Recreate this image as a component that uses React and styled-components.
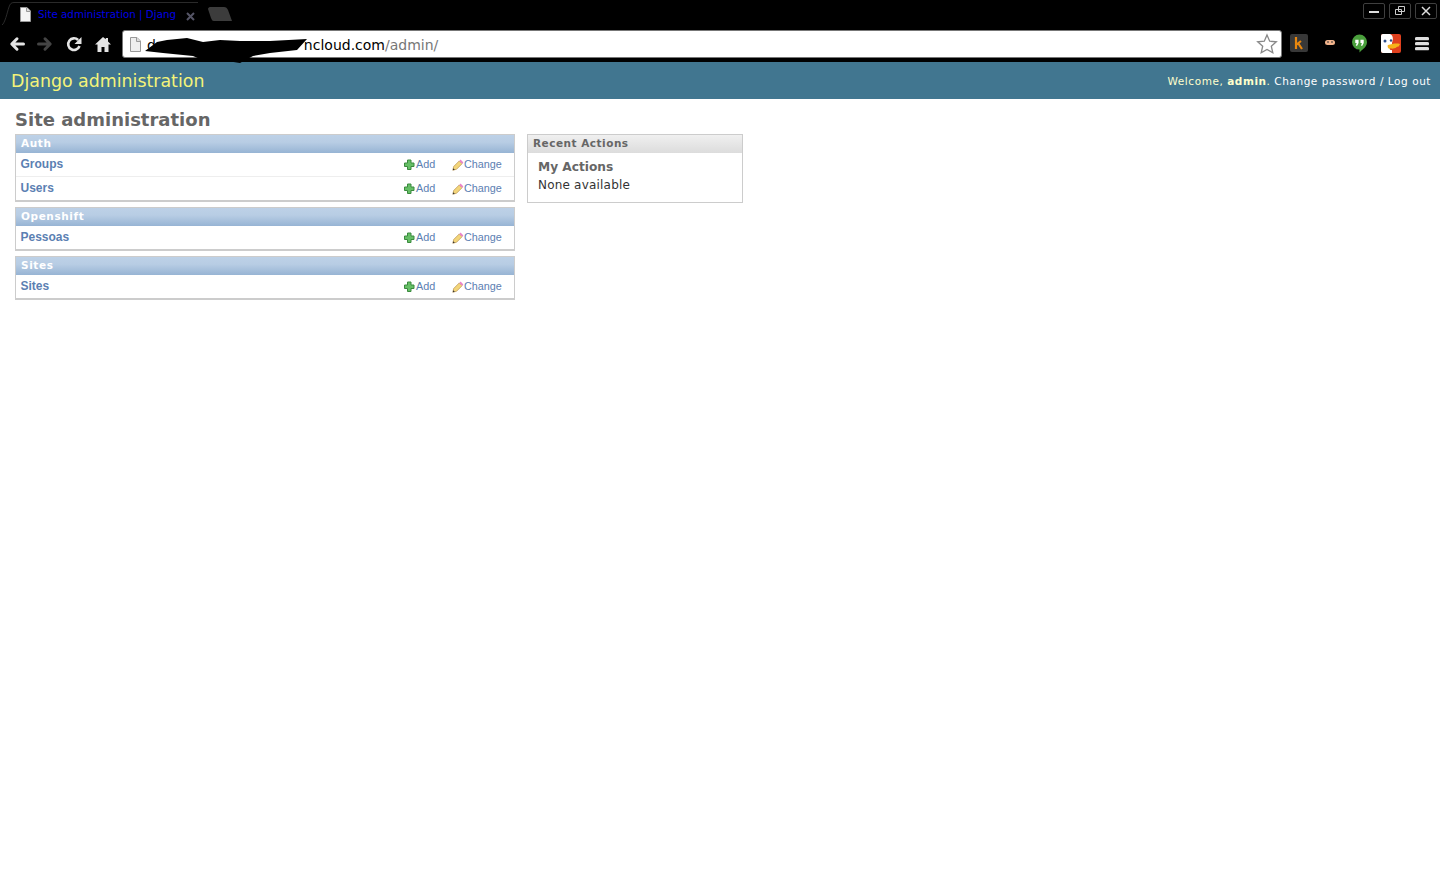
import styled, { createGlobalStyle } from "styled-components";

const GlobalStyle = createGlobalStyle`
  html, body {
    margin: 0;
    padding: 0;
    background: #fff;
    font-family: "DejaVu Sans", sans-serif;
  }
`;

const Page = styled.div`
  width: 1440px;
  height: 873px;
  overflow: hidden;
  background: #fff;
`;

// browser chrome
const BrowserChrome = styled.div`
  position: relative;
  z-index: 1;
  height: 62px;
  background: #000;
`;

const TabStrip = styled.div`
  height: 29px;
  display: flex;
  align-items: flex-start;
  justify-content: space-between;
`;

const Tabs = styled.div`
  display: flex;
  align-items: flex-start;
  padding-left: 2px;
`;

const Tab = styled.div`
  position: relative;
  width: 196px;
  height: 25px;
  margin-top: 2px;
  display: flex;
  align-items: center;
  padding-left: 18px;
  box-sizing: border-box;
`;

const TabTitle = styled.span`
  margin-left: 7px;
  margin-bottom: 2px;
  width: 142px;
  white-space: nowrap;
  color: #0000e6;
  font-size: 10.3px;
  line-height: 14px;
`;

const TabClose = styled.span`
  margin-left: 6px;
  margin-top: 3px;
  display: flex;
`;

const TabEdge = styled.svg`
  position: absolute;
  left: 0;
  top: 0;
`;

const NewTab = styled.svg`
  margin-top: 7px;
  margin-left: 10px;
`;

const WindowButtons = styled.div`
  display: flex;
  gap: 4px;
  padding: 3px 3px 0 0;
`;

const WindowButton = styled.div`
  width: 20px;
  height: 14px;
  border: 1px solid #3f3f3f;
  border-radius: 2px;
  display: flex;
  align-items: center;
  justify-content: center;
`;

const Toolbar = styled.div`
  height: 33px;
  display: flex;
  align-items: flex-start;
  padding-left: 8px;
`;

const NavIcon = styled.svg`
  flex: none;
  margin-right: ${(p) => p.$gap}px;
  margin-top: 6px;
`;

const Omnibox = styled.div`
  position: relative;
  width: 1160px;
  height: 28px;
  margin-top: 1px;
  margin-left: 1px;
  margin-right: 8px;
  flex: none;
  box-sizing: border-box;
  background: #fff;
  border: 1px solid #777;
  border-radius: 3px;
  display: flex;
  align-items: center;
  padding: 1px 0 0 7px;
  font-size: 14px;
`;

const UrlHost = styled.span`
  display: flex;
  justify-content: space-between;
  color: #000;
  margin-left: 6px;
  white-space: nowrap;
  width: 238px;
`;

const UrlPath = styled.span`
  color: #777;
`;

const Scribble = styled.svg`
  position: absolute;
  left: 22px;
  top: 7px;
`;

const StarIcon = styled.svg`
  position: absolute;
  right: 3px;
  top: 2px;
`;

const Extensions = styled.div`
  display: flex;
  align-items: flex-start;
`;

const ExtIcon = styled.svg`
  flex: none;
  margin-top: ${(p) => p.$top || 5}px;
  margin-right: ${(p) => p.$gap || 0}px;
`;

// django header
const Header = styled.header`
  height: 37px;
  box-sizing: border-box;
  background: #417690;
  display: flex;
  align-items: center;
  justify-content: space-between;
  padding: 0 9px 0 11px;
`;

const Branding = styled.h1`
  margin: 0;
  font-size: 17.4px;
  font-weight: 400;
  color: #f4f379;
  line-height: 22px;
`;

const UserTools = styled.div`
  margin-top: 1px;
  font-size: 10.5px;
  letter-spacing: 0.55px;
  color: #ffc;
  line-height: 14px;

  strong {
    font-weight: 700;
  }

  span {
    color: #fff;
  }
`;

const Content = styled.main`
  padding: 9px 15px 0;
`;

const Title = styled.h2`
  margin: 0 0 3px;
  font-size: 18px;
  line-height: 23px;
  font-weight: 700;
  color: #666;
`;

const Columns = styled.div`
  display: flex;
  align-items: flex-start;
  gap: 12px;
`;

const AppList = styled.div`
  width: 500px;
  display: flex;
  flex-direction: column;
  gap: 5px;
`;

const Module = styled.section`
  box-sizing: border-box;
  border: 1px solid #ccc;
  border-bottom-width: 2px;
`;

const Caption = styled.div`
  height: 18px;
  box-sizing: border-box;
  padding-left: 5px;
  background: linear-gradient(#bdd1e7 0%, #b8cde4 40%, #97b4d4 100%);
  color: #fff;
  font-size: 10.5px;
  font-weight: 700;
  letter-spacing: 0.6px;
  line-height: 17px;
`;

const Row = styled.div`
  height: ${(p) => (p.$first ? 23 : 24)}px;
  box-sizing: border-box;
  display: flex;
  align-items: flex-start;
  padding-left: 4.5px;
  border-top: ${(p) => (p.$first ? "none" : "1px solid #eee")};
`;

const ModelName = styled.a`
  flex: 1;
  margin-top: 4px;
  font-family: "Liberation Sans", Arial, sans-serif;
  font-size: 12px;
  font-weight: 700;
  line-height: 15px;
  color: #5b80b2;
`;

const ActionLink = styled.a`
  display: flex;
  align-items: center;
  margin-top: 4px;
  width: ${(p) => p.$w}px;
  font-family: "Liberation Sans", Arial, sans-serif;
  font-size: 10.8px;
  line-height: 14px;
  color: #5b80b2;
`;

const ActionIcon = styled.svg`
  flex: none;
  margin-top: 2px;
`;

const RecentPanel = styled.aside`
  width: 216px;
  height: 69px;
  box-sizing: border-box;
  border: 1px solid #ccc;
`;

const RecentCaption = styled.div`
  height: 18px;
  box-sizing: border-box;
  padding-left: 5px;
  background: linear-gradient(#f0f0f0, #dcdcdc);
  color: #666;
  font-size: 10.5px;
  font-weight: 700;
  letter-spacing: 0.5px;
  line-height: 17px;
`;

const RecentTitle = styled.h3`
  margin: 6px 0 0 10px;
  color: #666;
  font-size: 12.2px;
  line-height: 16px;
  font-weight: 700;
`;

const RecentBody = styled.p`
  margin: 3px 0 0 10px;
  color: #333;
  font-size: 12px;
  line-height: 15px;
  letter-spacing: 0.2px;
`;

const modules = [
  { name: "Auth", rows: ["Groups", "Users"] },
  { name: "Openshift", rows: ["Pessoas"] },
  { name: "Sites", rows: ["Sites"] },
];

function PageIcon({ fill, line }) {
  return (
    <svg width="11" height="15" viewBox="0 0 11 15" style={{ flex: "none" }}>
      <path d="M.5.5h6.500l3.500 3.500v10.500H.5z" fill={fill} stroke={line} />
      <path d="M6.500.5v4h4" fill="#ddd" stroke={line} />
    </svg>
  );
}

function PlusIcon() {
  return (
    <ActionIcon width="12" height="12" viewBox="0 0 12 12">
      <path d="M3.500 1h3.500v3h3v3.500H7v3H3.500v-3H.5V4h3z" fill="#66bf66" stroke="#3b8a3e" />
    </ActionIcon>
  );
}

function PencilIcon() {
  return (
    <ActionIcon width="12" height="12" viewBox="0 0 12 12">
      <path d="M.8 11.200l.9-3.700 5.600-5.600 2.800 2.800-5.600 5.600z" fill="#f3d57a" stroke="#b8924a" strokeWidth="0.7" />
      <path d="M7.300 1.900l1.300-1.300 2.800 2.800-1.300 1.300z" fill="#ea82c8" />
      <path d="M.8 11.200l.5-2 1.500 1.500z" fill="#333" />
    </ActionIcon>
  );
}

function ModuleRow({ label, first }) {
  return (
    <Row $first={first}>
      <ModelName>{label}</ModelName>
      <ActionLink $w={48}>
        <PlusIcon />
        Add
      </ActionLink>
      <ActionLink $w={62}>
        <PencilIcon />
        Change
      </ActionLink>
    </Row>
  );
}

export default function App() {
  return (
    <Page>
      <GlobalStyle />
      <BrowserChrome>
        <TabStrip>
          <Tabs>
            <Tab>
              <TabEdge width="196" height="25" viewBox="0 0 196 25">
                <path d="M0 23c3-2 5-12 7-18 1-3 2-4.500 5-4.500h184" fill="none" stroke="#2a2a2a" />
              </TabEdge>
              <PageIcon fill="#f5f5f5" line="#999" />
              <TabTitle>Site administration | Djang</TabTitle>
              <TabClose>
                <svg width="9" height="9" viewBox="0 0 9 9">
                  <path d="M1 1l7 7M8 1L1 8" stroke="#556" strokeWidth="2" />
                </svg>
              </TabClose>
            </Tab>
            <NewTab width="25" height="14" viewBox="0 0 25 14">
              <path d="M2 0h14c2 0 3 1 4 3l4 11H6c-2 0-2-1-3-3L0 2c0-1 1-2 2-2z" fill="#3c3c3c" />
            </NewTab>
          </Tabs>
          <WindowButtons>
            <WindowButton>
              <svg width="12" height="10" viewBox="0 0 12 10">
                <path d="M1 6h10" stroke="#ddd" strokeWidth="2" />
              </svg>
            </WindowButton>
            <WindowButton>
              <svg width="12" height="10" viewBox="0 0 12 10">
                <path d="M4.500.5h6v5h-6zM1.500 3.500h6v5h-6z" fill="none" stroke="#ccc" />
              </svg>
            </WindowButton>
            <WindowButton>
              <svg width="12" height="10" viewBox="0 0 12 10">
                <path d="M2 1l8 8M10 1L2 9" stroke="#ddd" strokeWidth="1.500" />
              </svg>
            </WindowButton>
          </WindowButtons>
        </TabStrip>
        <Toolbar>
          <NavIcon $gap={10} width="18" height="18" viewBox="0 0 18 18">
            <path d="M15.500 9H5M9 3.800L3.800 9 9 14.200" fill="none" stroke="#e4e4e4" strokeWidth="3" strokeLinecap="round" strokeLinejoin="round" />
          </NavIcon>
          <NavIcon $gap={11} width="18" height="18" viewBox="0 0 18 18">
            <path d="M2.500 9H13M9 3.800L14.200 9 9 14.200" fill="none" stroke="#444" strokeWidth="3" strokeLinecap="round" strokeLinejoin="round" />
          </NavIcon>
          <NavIcon $gap={12} width="18" height="18" viewBox="0 0 18 18">
            <path d="M14.500 11a5.800 5.800 0 1 1-1.400-6" fill="none" stroke="#e4e4e4" strokeWidth="2.600" />
            <path d="M16.500 2v7H9.500z" fill="#e4e4e4" />
          </NavIcon>
          <NavIcon $gap={10} width="16" height="18" viewBox="0 0 16 18">
            <path d="M8 2L0 9.500h2.500V17h4v-5h3v5h4V9.500H16l-3-3V3h-2.200v1.300z" fill="#e4e4e4" />
          </NavIcon>
          <Omnibox>
            <PageIcon fill="#eee" line="#999" />
            <UrlHost>
              <span>d</span>
              <span>ncloud.com</span>
            </UrlHost>
            <UrlPath>/admin/</UrlPath>
            <Scribble width="166" height="26" viewBox="0 0 166 26">
              <path d="M0 13L12 4L22 2L42 0L58 4L75 2L95 3L125 3L162 1L152 12L125 15L108 18L95 25L82 23L62 24L48 18L18 15Z" fill="#000" />
            </Scribble>
            <StarIcon width="22" height="22" viewBox="0 0 22 22">
              <path d="M11 2l2.700 6.200 6.600.6-5 4.400 1.500 6.600L11 16.400 5.200 19.800l1.500-6.600-5-4.400 6.600-.6z" fill="#fff" stroke="#888" strokeWidth="1.300" />
            </StarIcon>
          </Omnibox>
          <Extensions>
            <ExtIcon $gap={14} width="18" height="18" viewBox="0 0 18 18">
              <rect width="18" height="18" rx="2" fill="#383838" />
              <path d="M6 3v12M6 11l5-4M8 9l4 6" stroke="#e8870e" strokeWidth="2.200" fill="none" />
            </ExtIcon>
            <ExtIcon $gap={14} $top={6} width="16" height="16" viewBox="0 0 16 16">
              <rect x="3" y="5" width="10" height="5" rx="2.500" fill="#f2b48c" />
              <path d="M5 7h2M9 7h2" stroke="#333" strokeWidth="1" />
            </ExtIcon>
            <ExtIcon $gap={14} width="15" height="19" viewBox="0 0 16 19">
              <path d="M8 0a8 8 0 0 1 8 8c0 4-3 7-6 9l-2 2v-3a8 8 0 0 1 0-16z" fill="#4a9f3c" />
              <path d="M3.500 5.500h3.500v3.500l-1.500 3H4l1-3H3.500zM9 5.500h3.500v3.500l-1.500 3H9.500l1-3H9z" fill="#fff" />
            </ExtIcon>
            <ExtIcon $gap={14} width="20" height="19" viewBox="0 0 20 19">
              <rect width="20" height="19" rx="2" fill="#e0401e" />
              <path d="M0 2a2 2 0 0 1 2-2h7c4 2 3 6 2 9v10H2a2 2 0 0 1-2-2z" fill="#fff" />
              <circle cx="4" cy="7" r="1.500" fill="#2a4d8a" />
              <circle cx="10" cy="6.500" r="1.200" fill="#2a4d8a" />
              <path d="M7 11c4-1 8-2 12-1-1 3-4 5-10 5-2 0-3-3-2-4z" fill="#f5b21a" />
              <path d="M9 15c3 1 6 0 8-2" stroke="#e0401e" strokeWidth="1.500" fill="none" />
            </ExtIcon>
            <ExtIcon $top={8} width="14" height="14" viewBox="0 0 14 14">
              <path d="M1.500 1.700h11M1.500 6.700h11M1.500 11.700h11" stroke="#dedede" strokeWidth="3.200" strokeLinecap="round" />
            </ExtIcon>
          </Extensions>
        </Toolbar>
      </BrowserChrome>

      <Header>
        <Branding>Django administration</Branding>
        <UserTools>
          Welcome, <strong>admin</strong>. <span>Change password / Log out</span>
        </UserTools>
      </Header>

      <Content>
        <Title>Site administration</Title>
        <Columns>
          <AppList>
            {modules.map((m) => (
              <Module key={m.name}>
                <Caption>{m.name}</Caption>
                {m.rows.map((r, i) => (
                  <ModuleRow key={r} label={r} first={i === 0} />
                ))}
              </Module>
            ))}
          </AppList>
          <RecentPanel>
            <RecentCaption>Recent Actions</RecentCaption>
            <RecentTitle>My Actions</RecentTitle>
            <RecentBody>None available</RecentBody>
          </RecentPanel>
        </Columns>
      </Content>
    </Page>
  );
}
